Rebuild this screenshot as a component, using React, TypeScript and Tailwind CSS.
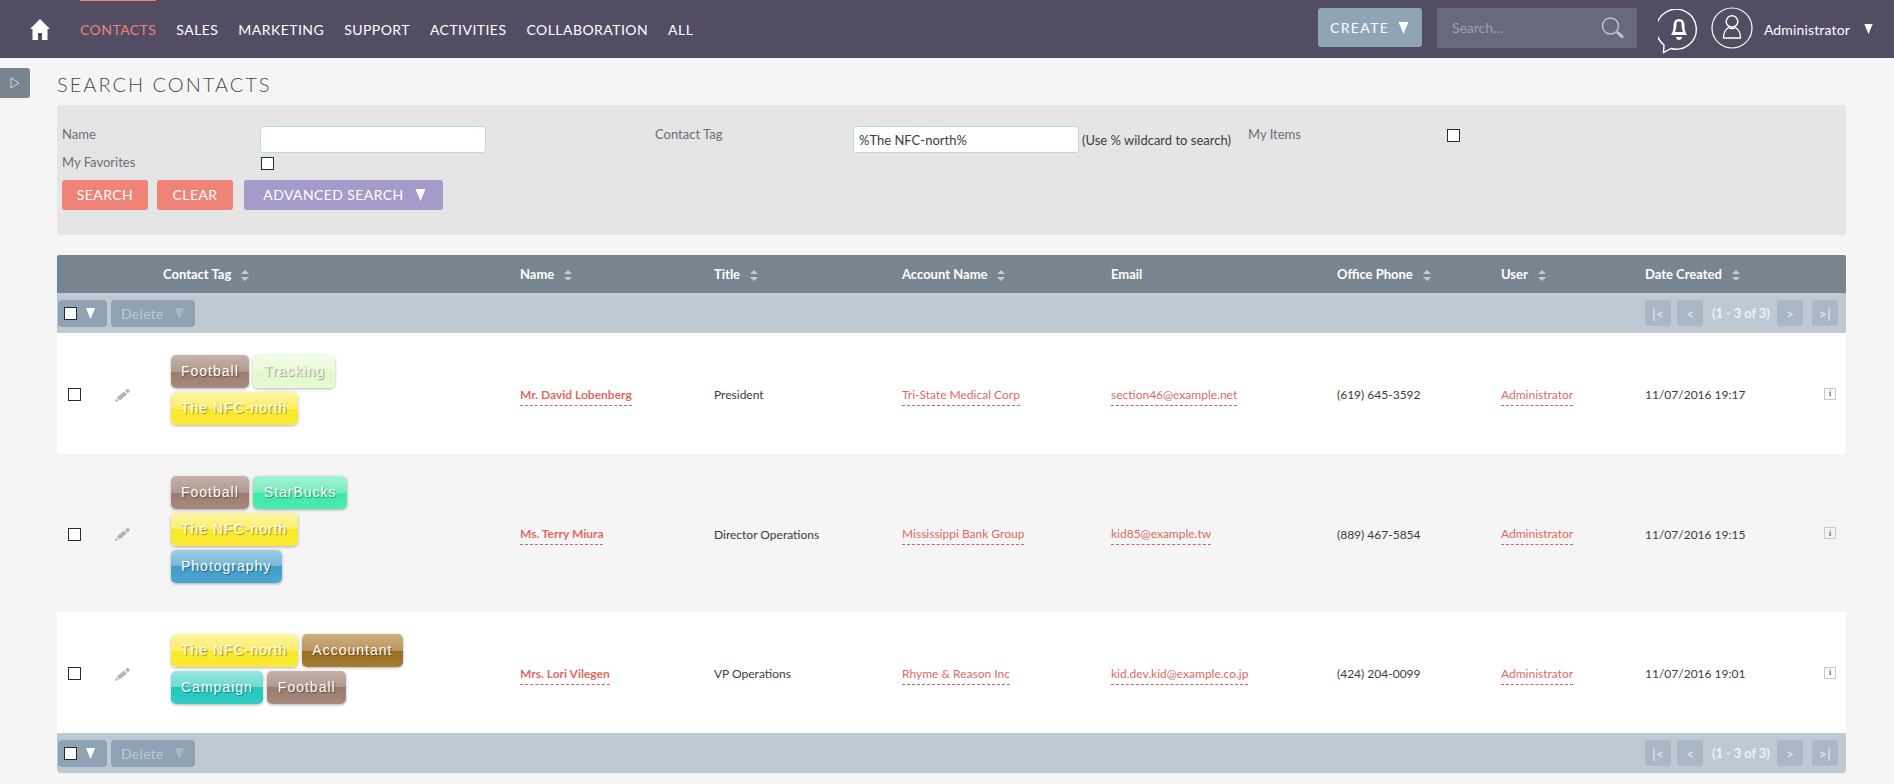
import React from "react";

const tagStyles: Record<string, string> = {
  Football: "bg-[linear-gradient(#c6b2a9,#b09a8e_50%,#9a7b6c_50%,#a78b7e)]",
  Tracking: "bg-[linear-gradient(#f2fce6,#e9fbd8_50%,#dff9c8_50%,#e5fbd2)]",
  "The NFC-north": "bg-[linear-gradient(#fdf5a2,#fcee68_50%,#fbe824_50%,#fae93a)]",
  StarBucks: "bg-[linear-gradient(#a6f3d6,#74eebd_50%,#3de9a7_50%,#4cebb0)]",
  Photography: "bg-[linear-gradient(#9bcce4,#76b8da_50%,#3f9ec9_50%,#4ea6d0)]",
  Accountant: "bg-[linear-gradient(#cdae80,#bb975f_50%,#996d1f_50%,#a57c36)]",
  Campaign: "bg-[linear-gradient(#96e5e0,#6cdbd5_50%,#20c8c1_50%,#34ccc6)]",
};

function Tag({ name }: { name: string }) {
  const light = name === "Tracking";
  return (
    <span
      className={`inline-block h-[33px] rounded-[5px] px-[10.5px] font-['Liberation_Sans',sans-serif] text-[14px] leading-[32px] tracking-[1px] shadow-[0_1px_3px_rgba(0,0,0,0.3)] [text-shadow:1px_1px_1px_rgba(0,0,0,0.4)] ${light ? "text-[#f4f8ee]" : "text-white"} ${tagStyles[name]}`}
    >
      {name}
    </span>
  );
}

function Caret({ className = "" }: { className?: string }) {
  return (
    <svg viewBox="0 0 10 12" className={className} fill="currentColor">
      <path d="M0 0H10L5 12Z" />
    </svg>
  );
}

function SortIcon() {
  return (
    <svg viewBox="0 0 8 11" className="ml-[10px] h-[11px] w-[8px] text-[#c4ccd3]" fill="currentColor">
      <path d="M4 0L8 4H0Z" />
      <path d="M0 7H8L4 11Z" />
    </svg>
  );
}

function Pencil() {
  return (
    <svg viewBox="0 0 15 14" className="h-[14px] w-[15px] text-[#b4b4b4]" fill="currentColor">
      <path d="M0 14L1 10.5L3.6 12.8Z" />
      <path d="M2 9.6L9 3.6L12 6.6L4.6 12.4Z" />
      <path d="M10 2.8L13 0.4L15 3L12.8 5.6Z" />
    </svg>
  );
}

function Box({ className = "" }: { className?: string }) {
  return <span className={`block h-[13px] w-[13px] border border-[#2b2b2b] bg-white ${className}`} />;
}

function ActionBar({ rounded }: { rounded?: boolean }) {
  const pg = "flex h-[26px] w-[26px] items-center justify-center rounded-[3px] bg-[#a9b8c6] text-[14px] font-bold text-[#dbe2e8]";
  return (
    <div className={`flex h-[40px] items-center bg-[#bdc9d3] pl-[1px] pr-[8px] ${rounded ? "rounded-b-[4px]" : ""}`}>
      <div className="flex h-[27px] w-[49px] items-center rounded-[4px] bg-[#8fa3b5] pl-[6px]">
        <Box />
        <Caret className="ml-[8px] h-[11px] w-[11px] text-white" />
      </div>
      <div className="ml-[4px] flex h-[27px] w-[84px] items-center rounded-[4px] bg-[#8fa3b5] pl-[10px] text-[14px] tracking-[0.3px] text-[#bccad5]">
        Delete
        <Caret className="ml-[10px] h-[11px] w-[11px] text-[#a9b9c6]" />
      </div>
      <div className="ml-auto flex items-center">
        <span className={pg}>|&lt;</span>
        <span className={`${pg} ml-[6px]`}>&lt;</span>
        <span className="mx-[9px] w-[56px] whitespace-nowrap pt-[2px] text-center text-[13px] font-bold tracking-[-0.1px] text-[#eef1f4]">(1 - 3 of 3)</span>
        <span className={pg}>&gt;</span>
        <span className={`${pg} ml-[9px]`}>&gt;|</span>
      </div>
    </div>
  );
}

function LinkText({ children, bold }: { children: React.ReactNode; bold?: boolean }) {
  return (
    <span className={`inline-block border-b border-dashed border-[#d9605a] pb-[1px] text-[#dd6a62] ${bold ? "font-bold" : ""}`}>
      {children}
    </span>
  );
}

const rows = [
  {
    h: "h-[121px]",
    bg: "bg-white",
    tags: ["Football", "Tracking", "The NFC-north"],
    name: "Mr. David Lobenberg",
    title: "President",
    account: "Tri-State Medical Corp",
    email: "section46@example.net",
    phone: "(619) 645-3592",
    date: "11/07/2016 19:17",
  },
  {
    h: "h-[158px]",
    bg: "bg-[#f5f5f5]",
    tags: ["Football", "StarBucks", "The NFC-north", "Photography"],
    name: "Ms. Terry Miura",
    title: "Director Operations",
    account: "Mississippi Bank Group",
    email: "kid85@example.tw",
    phone: "(889) 467-5854",
    date: "11/07/2016 19:15",
  },
  {
    h: "h-[121px]",
    bg: "bg-white",
    tags: ["The NFC-north", "Accountant", "Campaign", "Football"],
    name: "Mrs. Lori Vilegen",
    title: "VP Operations",
    account: "Rhyme & Reason Inc",
    email: "kid.dev.kid@example.co.jp",
    phone: "(424) 204-0099",
    date: "11/07/2016 19:01",
  },
];

const nav = ["SALES", "MARKETING", "SUPPORT", "ACTIVITIES", "COLLABORATION", "ALL"];

function Head({ w, label, sort = true }: { w: string; label: string; sort?: boolean }) {
  return (
    <div className={`flex items-center ${w}`}>
      <span>{label}</span>
      {sort && <SortIcon />}
    </div>
  );
}

export default function App() {
  return (
    <div className="relative h-screen overflow-hidden bg-[#f5f5f5] font-['Lato',sans-serif] text-[12px] text-[#3c3c3c]">
      <header className="relative flex h-[58px] items-center bg-[#534d64] text-white">
        <svg viewBox="0 0 20 21" className="ml-[30px] h-[21px] w-[20px]" fill="currentColor">
          <path d="M10 0L20 10H17.5V21H12V14H8V21H2.5V10H0Z" />
        </svg>
        <nav className="ml-[30px] mt-[2px] flex items-center gap-[20px] text-[14px] leading-[20px] tracking-[0.45px]">
          <span className="relative text-[#f08377]">
            CONTACTS
            <span className="absolute left-0 right-0 top-[-20px] h-[1px] bg-[#f08377]" />
          </span>
          {nav.map((n) => (
            <span key={n}>{n}</span>
          ))}
        </nav>
        <div className="ml-auto flex items-center pr-[21px]">
          <div className="mb-[3px] flex h-[39px] w-[104px] items-center rounded-[3px] bg-[#8fa4b6] pl-[12px] text-[14px] tracking-[1.4px]">
            CREATE
            <Caret className="ml-[9px] h-[12px] w-[11px]" />
          </div>
          <div className="ml-[15px] mb-[3px] flex h-[40px] w-[200px] items-center bg-[#676a7c] pl-[15px] text-[14px] text-[#9ca0ae]">
            Search...
            <svg viewBox="0 0 24 22" className="ml-auto mr-[12px] h-[22px] w-[24px]" fill="none" stroke="#c3c6cf">
              <circle cx="9.5" cy="9" r="8" strokeWidth="1.4" />
              <path d="M16 15L22 20.5" strokeWidth="3" />
            </svg>
          </div>
          <svg viewBox="0 0 42 46" className="ml-[21px] mt-[5px] h-[46px] w-[42px]" fill="none">
            <path d="M6 36A20 20 0 1 1 13 39.5L5.5 43.5Z" stroke="#fff" strokeWidth="1.4" />
            <path d="M21 10C16 10 15.5 14 15.5 18C15.5 22 14 24 13 26H29C28 24 26.5 22 26.5 18C26.5 14 26 10 21 10Z" fill="#fff" />
            <path d="M18 28H24C24 30 22.5 31 21 31C19.5 31 18 30 18 28Z" fill="#fff" />
            <path d="M18.5 14.5C18.5 17 18.2 20 17 23H25C23.8 20 23.5 17 23.5 14.5C23.5 13 22.5 12.6 21 12.6C19.5 12.6 18.5 13 18.5 14.5Z" fill="#534d64" />
          </svg>
          <svg viewBox="0 0 42 42" className="ml-[11px] mb-[3px] h-[42px] w-[42px]" fill="none" stroke="#fff" strokeWidth="1.2">
            <circle cx="21" cy="21" r="20" />
            <circle cx="21" cy="14.5" r="5.8" strokeWidth="1.4" />
            <path d="M12.5 31H29.5C29.5 25.5 27 22 24.5 20.5C22.5 21.8 19.5 21.8 17.5 20.5C15 22 12.5 25.5 12.5 31Z" strokeWidth="1.4" />
          </svg>
          <span className="ml-[11px] text-[14px] tracking-[0.15px]">Administrator</span>
          <Caret className="ml-[14px] h-[10px] w-[9px]" />
        </div>
      </header>

      <div className="absolute left-0 top-[68px] flex h-[30px] w-[30px] items-center justify-center rounded-r-[3px] bg-[#778591]">
        <svg viewBox="0 0 10 12" className="h-[12px] w-[10px]" fill="none" stroke="#d5dbe0" strokeWidth="1">
          <path d="M1 1L9 6L1 11Z" />
        </svg>
      </div>

      <main className="pl-[57px] pr-[48px]">
        <h1 className="h-[47px] pt-[13px] text-[20px] font-light leading-[27px] tracking-[2px] text-[#4a4a4a]">SEARCH CONTACTS</h1>

        <section className="h-[130px] rounded-[3px] bg-[#e5e5e5] pl-[5px] pt-[21px] text-[13px] text-[#6e6e78]">
          <div className="flex h-[27px]">
            <span className="w-[198px] leading-[16px]">Name</span>
            <span className="h-[27px] w-[226px] rounded-[3px] border border-[#b5e0d4] bg-white" />
            <span className="ml-[169px] w-[198px] leading-[16px]">Contact Tag</span>
            <span className="h-[27px] w-[226px] rounded-[3px] border border-[#b5e0d4] bg-white pl-[5px] leading-[26px] text-[#3c3c3c]">%The NFC-north%</span>
            <span className="ml-[3px] w-[166px] whitespace-nowrap leading-[28px] text-[#3c3c3c]">(Use % wildcard to search)</span>
            <span className="w-[199px] leading-[16px]">My Items</span>
            <Box className="mt-[3px]" />
          </div>
          <div className="mt-[4px] flex h-[13px]">
            <span className="w-[199px] leading-[10px]">My Favorites</span>
            <Box />
          </div>
          <div className="mt-[10px] flex h-[30px] items-center gap-[9px] text-[14px] tracking-[0.4px] text-white">
            <span className="flex h-[30px] w-[86px] items-center justify-center rounded-[3px] bg-[#f08377] pb-[1px]">SEARCH</span>
            <span className="flex h-[30px] w-[76px] items-center justify-center rounded-[3px] bg-[#f08377] pb-[1px]">CLEAR</span>
            <span className="ml-[2px] flex h-[30px] w-[199px] items-center justify-center rounded-[3px] bg-[#a59ac9] pb-[1px] pl-[2px]">
              ADVANCED SEARCH
              <Caret className="ml-[11px] h-[12px] w-[11px]" />
            </span>
          </div>
        </section>

        <section className="mt-[20px]">
          <div className="flex h-[38px] items-center rounded-t-[2px] bg-[#778591] pl-[106px] pt-[2px] text-[13px] font-bold text-white">
            <Head w="w-[357px]" label="Contact Tag" />
            <Head w="w-[194px]" label="Name" />
            <Head w="w-[188px]" label="Title" />
            <Head w="w-[209px]" label="Account Name" />
            <Head w="w-[226px]" label="Email" sort={false} />
            <Head w="w-[164px]" label="Office Phone" />
            <Head w="w-[144px]" label="User" />
            <Head w="w-[170px]" label="Date Created" />
          </div>
          <ActionBar />
          {rows.map((r) => (
            <div key={r.name} className={`flex items-center ${r.h} ${r.bg}`}>
              <div className="mt-[2px] w-[58px] pl-[11px]">
                <Box />
              </div>
              <div className="mt-[2px] w-[48px]">
                <Pencil />
              </div>
              <div className="w-[357px] pl-[7.5px]">
                <div className="mb-[7px] flex w-[240px] flex-wrap gap-[4px]">
                  {r.tags.map((t) => (
                    <Tag key={t} name={t} />
                  ))}
                </div>
              </div>
              <div className="mt-[4px] w-[194px]">
                <LinkText bold>{r.name}</LinkText>
              </div>
              <div className="mt-[3px] w-[188px]">{r.title}</div>
              <div className="mt-[4px] w-[209px]">
                <LinkText>{r.account}</LinkText>
              </div>
              <div className="mt-[4px] w-[226px]">
                <LinkText>{r.email}</LinkText>
              </div>
              <div className="mt-[3px] w-[164px]">{r.phone}</div>
              <div className="mt-[4px] w-[144px]">
                <LinkText>Administrator</LinkText>
              </div>
              <div className="mt-[3px] w-[179px]">{r.date}</div>
              <span className="flex h-[12px] w-[12px] items-center justify-center border border-[#c8c8c8] font-['Liberation_Serif',serif] text-[9px] font-bold leading-none text-[#777]">i</span>
            </div>
          ))}
          <ActionBar rounded />
        </section>
      </main>
    </div>
  );
}
